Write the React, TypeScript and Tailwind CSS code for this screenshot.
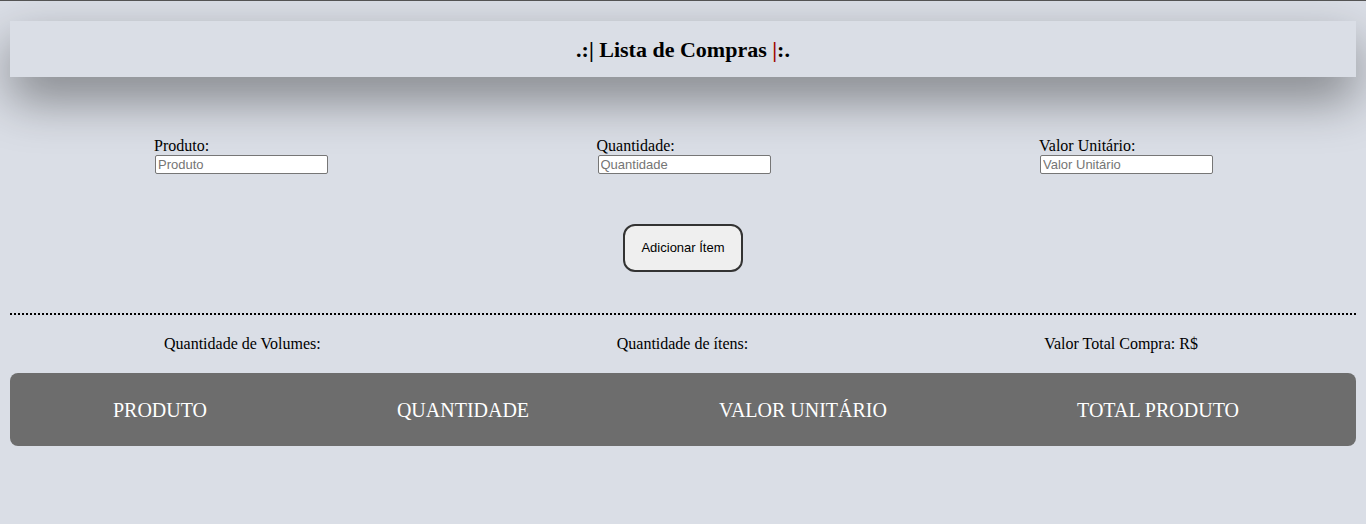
const serif = { fontFamily: '"Liberation Serif", "Times New Roman", serif' };

function Field({ label }: { label: string }) {
  return (
    <div className="flex w-[174px] flex-col">
      <label className="text-[16px] leading-[18px] text-black">{label}</label>
      <input
        type="text"
        placeholder={label.replace(":", "")}
        className="ml-[1px] h-[19px] w-[173px] rounded-[2px] border border-[#767676] bg-white px-[2px] font-['Liberation_Sans',Arial,sans-serif] text-[13px] text-black placeholder:text-[#757575] outline-none"
      />
    </div>
  );
}

export default function App() {
  return (
    <div className="min-h-[524px] border-t border-[#555] bg-[#dadee6] pt-[20px] text-black" style={serif}>
      <header className="mx-[10px] flex h-[56px] items-center justify-center bg-[#dadee6] shadow-[0_22px_50px_rgba(0,0,0,0.42)]">
        <h1 className="text-[22px] font-bold">
          .:| Lista de Compras <span className="text-[#a00000]">|</span>:.
        </h1>
      </header>

      <div className="mt-[60px] flex pl-[154px] gap-[268.5px]">
        <Field label="Produto:" />
        <Field label="Quantidade:" />
        <Field label="Valor Unitário:" />
      </div>

      <div className="mt-[50px] flex justify-center">
        <button
          type="button"
          className="h-[48px] w-[120px] rounded-[12px] border-2 border-[#333] bg-[#efefef] font-['Liberation_Sans',Arial,sans-serif] text-[13px] text-black"
        >
          Adicionar Ítem
        </button>
      </div>

      <div className="mx-[10px] mt-[41px] border-t-2 border-dotted border-black" />

      <div className="mt-[20px] flex h-[18px] items-center text-[16px] leading-[18px]">
        <span className="ml-[164px]">Quantidade de Volumes:</span>
        <span className="ml-[296px]">Quantidade de ítens:</span>
        <span className="ml-[296px]">Valor Total Compra: R$</span>
      </div>

      <div className="mx-[10px] mt-[20px] flex h-[73px] items-center rounded-[8px] bg-[#6d6d6d] text-[20px] uppercase text-white">
        <div className="w-[300px] text-center">Produto</div>
        <div className="w-[306px] text-center">Quantidade</div>
        <div className="w-[374px] text-center">Valor Unitário</div>
        <div className="w-[336px] text-center">Total Produto</div>
      </div>
    </div>
  );
}
